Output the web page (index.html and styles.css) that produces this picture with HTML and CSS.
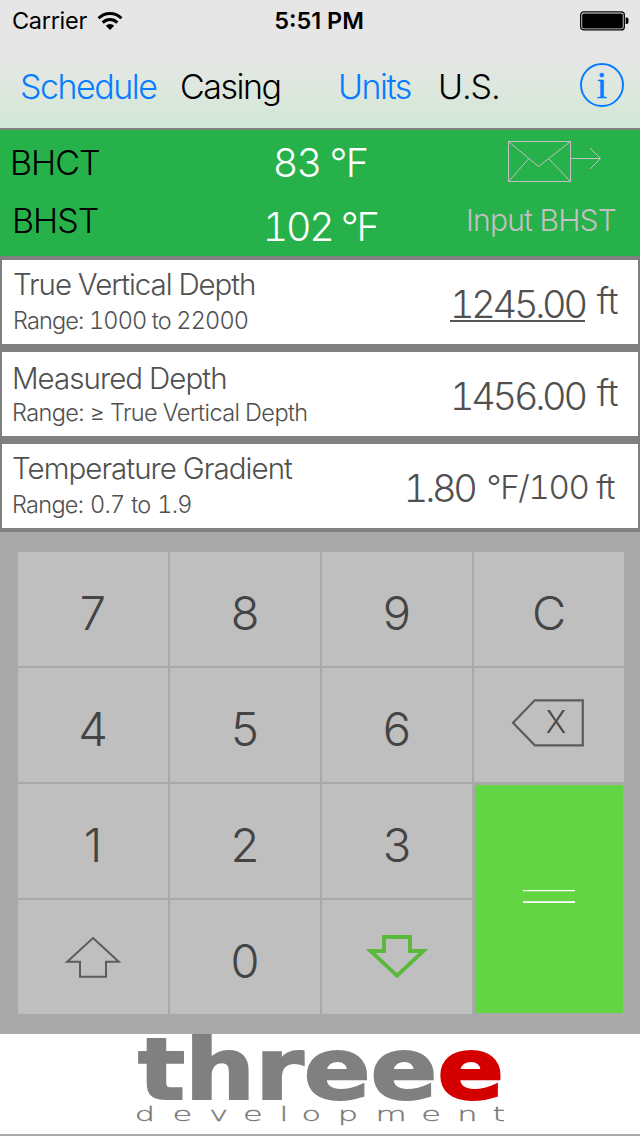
FILE: index.html
```html
<!DOCTYPE html>
<html lang="en">
<head>
    <meta charset="UTF-8">
    <meta name="viewport" content="width=device-width, initial-scale=1.0">
    <title>BHCT Calculator</title>
    <link rel="stylesheet" href="styles.css">
</head>
<body>
    <div class="header">
        <div class="status-bar">
            <div class="carrier">
                <span>Carrier</span>
                <svg class="wifi" width="26" height="20" viewBox="0 0 26 20" fill="none" stroke="#000" stroke-width="3">
                    <path d="M1.6 7.2a16 16 0 0 1 22.8 0"/>
                    <path d="M5.7 11.6a10.4 10.4 0 0 1 14.6 0"/>
                    <path d="M13 19l-4.2-4.3a6 6 0 0 1 8.4 0z" fill="#000" stroke="none"/>
                </svg>
            </div>
            <div class="clock">5:51 PM</div>
            <svg class="battery" width="50" height="20" viewBox="0 0 50 20">
                <rect x="1.7" y="0.9" width="43.6" height="18" rx="3" fill="none" stroke="#000" stroke-width="1.3"/>
                <rect x="3.2" y="2.4" width="40.6" height="15" rx="1.5"/>
                <path d="M46.7 6.5h1a2 2 0 0 1 1.8 2v2.5a2 2 0 0 1-1.8 2h-1z"/>
            </svg>
        </div>
        <div class="nav">
            <a class="link schedule">Schedule</a>
            <span class="casing">Casing</span>
            <a class="link units">Units</a>
            <span class="us">U.S.</span>
            <a class="info">i</a>
        </div>
    </div>

    <div class="results">
        <div class="result">
            <span class="result-name bhct">BHCT</span>
            <span class="result-value circulating">83 °F</span>
            <svg class="mail" width="96" height="44" viewBox="0 0 96 44" fill="none" stroke="#c6bfc6">
                <rect x="1.5" y="2.5" width="62" height="40"/>
                <path d="M1.5 2.5l30 25 32-25M1.5 42.5l20-22.5M63.5 42.5l-21.5-22.5M63.5 19.5h30M83 9l10.5 10.5L83 30"/>
            </svg>
        </div>
        <div class="result second">
            <span class="result-name bhst">BHST</span>
            <span class="result-value static">102 °F</span>
            <span class="input-bhst">Input BHST</span>
        </div>
    </div>

    <div class="fields">
        <div class="field depth">
            <div class="field-text">
                <div class="name">True Vertical Depth</div>
                <div class="range">Range: 1000 to 22000</div>
            </div>
            <div class="value active">1245.00</div>
            <div class="unit">ft</div>
        </div>
        <div class="field measured">
            <div class="field-text">
                <div class="name">Measured Depth</div>
                <div class="range">Range: ≥ True Vertical Depth</div>
            </div>
            <div class="value">1456.00</div>
            <div class="unit">ft</div>
        </div>
        <div class="field gradient">
            <div class="field-text">
                <div class="name">Temperature Gradient</div>
                <div class="range">Range: 0.7 to 1.9</div>
            </div>
            <div class="value">1.80</div>
            <div class="unit">°F/100 ft</div>
        </div>
    </div>

    <div class="keypad">
        <div class="key">7</div>
        <div class="key">8</div>
        <div class="key">9</div>
        <div class="key clear">C</div>
        <div class="key">4</div>
        <div class="key">5</div>
        <div class="key">6</div>
        <div class="key icon">
            <svg width="150" height="114" viewBox="0 0 150 114">
                <path d="M39 54.7L60.8 32.3h48v45H60.8z" fill="none" stroke="#5c5c5c" stroke-width="2.2"/>
                <text class="erase" x="82" y="65" text-anchor="middle">X</text>
            </svg>
        </div>
        <div class="key">1</div>
        <div class="key">2</div>
        <div class="key">3</div>
        <div class="key equals">
            <svg width="148" height="228" viewBox="0 0 148 228" fill="#fff">
                <rect x="48" y="105" width="52" height="1.2"/>
                <rect x="48" y="116.2" width="52" height="1.8"/>
            </svg>
        </div>
        <div class="key icon">
            <svg width="150" height="114" viewBox="0 0 150 114" fill="none" stroke="#5c5c5c" stroke-width="2">
                <path d="M75 38l25.8 23.8H88v15H62v-15H49.2z"/>
            </svg>
        </div>
        <div class="key">0</div>
        <div class="key icon">
            <svg width="150" height="114" viewBox="0 0 150 114" fill="none" stroke="#58b93a" stroke-width="3.8">
                <path d="M62 37h26v14h13.5L75 75.7 48.5 51H62z"/>
            </svg>
        </div>
    </div>

    <div class="footer">
        <svg width="380" height="100" viewBox="0 0 380 100">
            <text class="brand" y="65" x="8" textLength="366" lengthAdjust="spacingAndGlyphs">thre<tspan>e</tspan><tspan class="red">e</tspan></text>
            <text class="tagline" transform="scale(1.6 1)" y="87" x="2.9 26.6 49.5 70.6 93.4 107.2 129.9 153.4 182 204.5 226.5">development</text>
        </svg>
    </div>
</body>
</html>
```
FILE: styles.css
```css
body {
    margin: 0;
    width: 640px;
    height: 1136px;
    overflow: hidden;
    font-family: Inter, "Liberation Sans", sans-serif;
    font-weight: 260;
    font-variant-numeric: tabular-nums;
    background-color: #fff;
    white-space: nowrap;
}
svg {
    display: block;
}
.header {
    box-sizing: border-box;
    height: 130px;
    background: linear-gradient(#e6e6e6 0px, #e6e6e6 50px, #dfe7df 85px, #d1e8d6 128px);
    border-bottom: 2px solid #828282;
}
.status-bar {
    display: grid;
    grid-template-columns: 259px 96px 1fr;
    height: 41px;
    line-height: 41px;
    padding: 0 11px 0 12px;
    font-size: 23.5px;
    align-items: center;
}
.carrier {
    display: flex;
    align-items: center;
    font-weight: 380;
    letter-spacing: -0.3px;
}
.wifi {
    margin-left: 10px;
}
.clock {
    font-weight: 600;
    font-variant-numeric: normal;
    letter-spacing: 0;
    text-align: center;
}
.battery {
    justify-self: end;
}
.nav {
    display: grid;
    grid-template-columns: 160px 158px 100px 142px 44px;
    height: 88px;
    line-height: 91px;
    padding-left: 20px;
    font-size: 34px;
    letter-spacing: -1.5px;
}
.us {
    letter-spacing: -0.8px;
}
.link {
    color: #087cff;
}
.info {
    box-sizing: border-box;
    width: 44px;
    height: 44px;
    margin-top: 22px;
    border: 2px solid #087cff;
    border-radius: 50%;
    color: #087cff;
    font: 37px/41px "Liberation Serif", serif;
    text-align: center;
    letter-spacing: 0;
    -webkit-text-stroke: 0.5px #087cff;
}
.results {
    box-sizing: border-box;
    height: 126px;
    background-color: #26b14a;
}
.result {
    display: grid;
    grid-template-columns: 210px 200px 1fr;
    padding: 0 24px 0 10px;
    height: 64px;
}
.result-name {
    font-size: 34px;
    line-height: 66px;
    letter-spacing: -1px;
}
.result-value {
    color: #fff;
    font-size: 39.5px;
    line-height: 66px;
    text-align: center;
    letter-spacing: -1.7px;
}
.static {
    letter-spacing: -2.3px;
}
.bhst {
    line-height: 54px;
    padding-left: 2px;
}
.mail {
    margin: 9px 0 0 87px;
}
.input-bhst {
    color: #c6bfc6;
    font-size: 30px;
    line-height: 53px;
    text-align: right;
    letter-spacing: -0.8px;
}
.fields {
    box-sizing: border-box;
    height: 276px;
    padding: 4px 2px;
    background-color: #808080;
    color: #505050;
    display: flex;
    flex-direction: column;
    gap: 8px;
}
.field {
    display: flex;
    box-sizing: border-box;
    height: 84px;
    padding: 0 20px 0 10px;
    background-color: #fff;
}
.field-text {
    flex: 1;
}
.depth .field-text {
    padding-left: 1px;
}
.name {
    font-size: 29.5px;
    line-height: 36px;
    padding-top: 6px;
    letter-spacing: -0.95px;
}
.depth .name {
    letter-spacing: -1.05px;
}
.range {
    font-size: 23.5px;
    line-height: 38px;
    letter-spacing: -0.6px;
}
.depth .range {
    letter-spacing: -0.85px;
}
.measured .name {
    padding-top: 8px;
}
.measured .range {
    line-height: 34px;
}
.gradient .range {
    letter-spacing: -0.7px;
    word-spacing: 1px;
}
.value {
    font-size: 38px;
    line-height: 88px;
    letter-spacing: -3.3px;
}
.active {
    height: 62px;
    box-sizing: border-box;
    border-bottom: 2px solid #555;
}
.unit {
    font-size: 36px;
    line-height: 82px;
    margin-left: 12px;
    letter-spacing: -0.5px;
}
.gradient {
    padding-right: 24px;
}
.gradient .unit {
    font-size: 33px;
    line-height: 86px;
    letter-spacing: -1.3px;
}
.keypad {
    box-sizing: border-box;
    height: 502px;
    padding: 20px 16px 20px 18px;
    background-color: #a9a9a9;
    display: grid;
    grid-template-columns: repeat(4, 150px);
    grid-template-rows: repeat(4, 114px);
    gap: 2px;
}
.key {
    background-color: #bfbfbf;
    color: #444;
    font-size: 47px;
    font-weight: 300;
    font-variant-numeric: normal;
    line-height: 121px;
    text-align: center;
    overflow: hidden;
}
.erase {
    font-size: 31px;
    fill: #484848;
}
.equals {
    grid-column: 4;
    grid-row: 3 / 5;
    margin: 1px;
    background-color: #63d444;
}
.footer {
    box-sizing: border-box;
    height: 102px;
    border-bottom: 2px solid #a9a9a9;
    padding-left: 130px;
}
.brand {
    font: bold 85px "DejaVu Sans", sans-serif;
    fill: #808080;
    stroke: #808080;
    stroke-width: 2px;
}
.brand .red {
    fill: #d40000;
    stroke: #d40000;
}
.tagline {
    font: 20px "DejaVu Sans", sans-serif;
    font-weight: 200;
    fill: #777;
    stroke: #777;
    stroke-width: 0.3px;
}
```
